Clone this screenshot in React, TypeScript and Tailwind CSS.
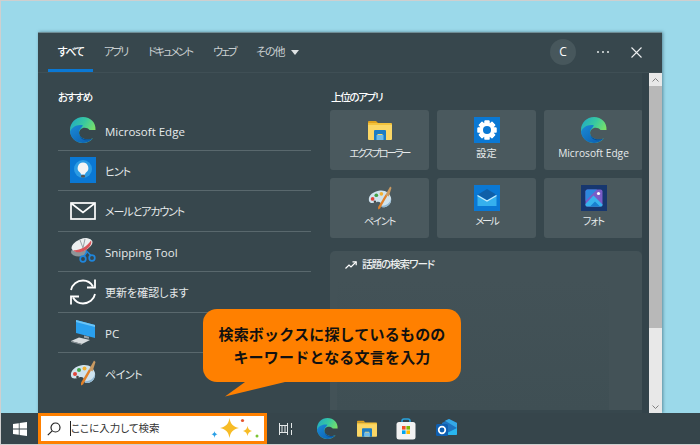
import React from "react";

const font = { fontFamily: '"Open Sans","Noto Sans CJK JP",sans-serif' };

function Edge({ s = 26 }: { s?: number }) {
  return (
    <svg width={s} height={s} viewBox="0 0 26 26" className="shrink-0">
      <defs>
        <linearGradient id="eg1" x1="0" y1="0" x2="1" y2="0.6">
          <stop offset="0" stopColor="#1ea6c9" />
          <stop offset="0.5" stopColor="#38c8a0" />
          <stop offset="1" stopColor="#8ae65a" />
        </linearGradient>
        <linearGradient id="eg2" x1="0" y1="0" x2="1" y2="1">
          <stop offset="0" stopColor="#1b8ad6" />
          <stop offset="1" stopColor="#0a5cae" />
        </linearGradient>
      </defs>
      <path d="M13 0C5.800 0 0 5.800 0 13c0 7.200 5.800 13 13 13 4 0 7.600-1.800 10-4.700-2.400 1.200-8 1.800-11.500-.8-3-2.200-3-6-1-8 2.500-2.500 7-2 9 .5h6C26 5.500 20.500 0 13 0z" fill="url(#eg1)" />
      <path d="M13 8.500C7.500 7 1.600 10 0 15c.8 6.500 6.300 11 13 11 4 0 7.600-1.800 10-4.700-2.400 1.200-8 1.800-11.500-.8-3-2.200-3.400-6.500-.8-9 .8-.9 1.500-2 2.300-3z" fill="url(#eg2)" />
      <path d="M9.500 17c0 3.500 3 6.500 7.500 6.300 2.300-.1 4.500-.9 6-2-2.400 1.200-8 1.800-11.500-.8-1-.8-1.700-2-2-3.500z" fill="#0b4f94" />
    </svg>
  );
}

function Paint({ s = 26 }: { s?: number }) {
  return (
    <svg width={s} height={s} viewBox="0 0 26 26" className="shrink-0">
      <path d="M1 16C0 10 6 6 13 5c6-.7 11 3 12 8 .8 5-2 9-7 10-2.500.5-4-1-4-3 0-2.500-2-3.500-5-2.500-3 1-7 2-8-1.500z" fill="#cfe3ee" />
      <path d="M14 21c2 .8 6 0 8.500-2.500 1.500-1.500 2.200-3.500 2.300-5.500.8 5-2 9-7 10-2 .4-3.500-.5-3.800-2z" fill="#8fb7d2" />
      <circle cx="5" cy="14" r="2" fill="#e0453a" />
      <circle cx="9" cy="10" r="2" fill="#43a047" />
      <circle cx="14.500" cy="8.500" r="2" fill="#f2b134" />
      <circle cx="7.500" cy="17" r="1.300" fill="#444" />
      <path d="M11 25.500l2-1 8-14-2-1.200-8 13.500z" fill="#e0812a" />
      <path d="M19 9.500l3.500 2 3-9.500-1.500-1.500z" fill="#c99a62" />
    </svg>
  );
}

function Hint() {
  return (
    <svg width="26" height="26" viewBox="0 0 26 26" className="shrink-0">
      <rect width="26" height="26" fill="#0a78d4" />
      <circle cx="13" cy="12" r="9" fill="#2b9be4" />
      <path d="M13 5.500a5.500 5.500 0 0 0-3 10c.7.6 1 1.200 1 2h4c0-.8.300-1.400 1-2a5.500 5.500 0 0 0-3-10z" fill="#f4f4f4" />
      <rect x="11" y="18" width="4" height="2.500" rx="1" fill="#555" />
    </svg>
  );
}

function MailOutline() {
  return (
    <svg width="26" height="18" viewBox="0 0 26 18" className="shrink-0">
      <rect x="1" y="1" width="24" height="16" fill="none" stroke="#fff" strokeWidth="1.700" />
      <path d="M1.500 1.500L13 10.500 24.500 1.500" fill="none" stroke="#fff" strokeWidth="1.700" />
    </svg>
  );
}

function Snip() {
  return (
    <svg width="26" height="26" viewBox="0 0 26 26" className="shrink-0">
      <ellipse cx="9" cy="14" rx="8" ry="4.500" fill="#8d9498" />
      <ellipse cx="12" cy="7" rx="11" ry="6" transform="rotate(-22 12 7)" fill="#eceff0" />
      <path d="M3 12c5 1 13-2 18-9.500 2 4-4 10-10 11.500-3 .7-6 .3-8-2z" fill="#d9555a" />
      <path d="M10 2l3 8M15 1l-2 9" stroke="#9aa2a6" strokeWidth="1" />
      <circle cx="13" cy="21" r="2.800" fill="none" stroke="#1f86dc" strokeWidth="1.700" />
      <circle cx="22" cy="20" r="2.800" fill="none" stroke="#1f86dc" strokeWidth="1.700" />
      <path d="M14 18.500l3-5M21 17.500l-5-5" stroke="#1f86dc" strokeWidth="1.500" />
    </svg>
  );
}

function Refresh() {
  return (
    <svg width="26" height="26" viewBox="0 0 26 26" className="shrink-0" fill="none" stroke="#fff" strokeWidth="1.800">
      <path d="M1 11C2 5.500 7 1.500 13 1.500c4.200 0 7.800 2.200 10 6" />
      <path d="M25 .5v8h-8" />
      <path d="M25 15c-1 5.500-6 9.500-12 9.500-4.200 0-7.800-2.200-10-6" />
      <path d="M1 25.500v-8h8" />
    </svg>
  );
}

function Pc() {
  return (
    <svg width="26" height="26" viewBox="0 0 26 26" className="shrink-0">
      <path d="M6 1l19 5v13L6 14z" fill="#2aa0ee" />
      <path d="M6 1l19 5v2L6 3z" fill="#6cc4f5" />
      <path d="M14 16.500l5 1.300v2l-5-1z" fill="#9aa4aa" />
      <path d="M1 22l8-3.500 11 2.500-8 4z" fill="#d8dcde" />
      <path d="M1 22l11 3v1L1 23z" fill="#8f979b" />
    </svg>
  );
}

function Folder({ w = 24 }: { w?: number }) {
  return (
    <svg width={w} height={(w * 20) / 24} viewBox="0 0 24 20" className="shrink-0">
      <path d="M0 2a1 1 0 0 1 1-1h7l2 2h-10z" fill="#e0a21e" />
      <path d="M0 3h23a1 1 0 0 1 1 1v3H0z" fill="#f3c23c" />
      <path d="M0 5h24v14a1 1 0 0 1-1 1H1a1 1 0 0 1-1-1z" fill="#fbd766" />
      <path d="M6 20v-9a1 1 0 0 1 1-1h10a1 1 0 0 1 1 1v9h-3.500v-6h-5v6z" fill="#1d7dc4" />
      <rect x="8.500" y="15" width="7" height="5" fill="#6fbbe8" />
    </svg>
  );
}

function Gear() {
  const teeth = [0, 45, 90, 135, 180, 225, 270, 315];
  return (
    <svg width="26" height="26" viewBox="0 0 26 26" className="shrink-0">
      <rect width="26" height="26" fill="#0a78d4" />
      {teeth.map((a) => (
        <rect key={a} x="10.500" y="3.500" width="5" height="19" rx="0.500" fill="#fff" transform={`rotate(${a} 13 13)`} />
      ))}
      <circle cx="13" cy="13" r="7.300" fill="#fff" />
      <circle cx="13" cy="13" r="4" fill="#0a78d4" />
    </svg>
  );
}

function MailColor() {
  return (
    <svg width="26" height="26" viewBox="0 0 26 26" className="shrink-0">
      <rect width="26" height="26" fill="#0a78d4" />
      <path d="M4 9.500L13 4l9 5.500L13 15z" fill="#0f5fa8" />
      <path d="M3.500 10.500L13 16l9.500-5.500V21H3.500z" fill="#35b0ee" />
      <path d="M3.500 10.500L13 16l9.500-5.500" fill="none" stroke="#c9ecfb" strokeWidth="1.200" />
    </svg>
  );
}

function Photos() {
  return (
    <svg width="26" height="26" viewBox="0 0 26 26" className="shrink-0">
      <rect width="26" height="26" fill="#17376f" />
      <rect x="4.500" y="4.500" width="17" height="17" rx="2" fill="#7a5cc6" />
      <path d="M4.500 19l8-8.500 9 9v.5a1.500 1.500 0 0 1-1.500 1.500H6a1.500 1.500 0 0 1-1.500-1.500z" fill="#37b4ee" />
      <path d="M9 21.500l5-5 5 5z" fill="#1880d0" />
      <circle cx="17.500" cy="8.500" r="1.600" fill="#fff" />
      <path d="M4.500 6.500a2 2 0 0 1 2-2H16L4.500 16z" fill="#2d88de" />
    </svg>
  );
}

function Sparkles() {
  return (
    <svg width="48" height="21" viewBox="0 0 48 21" className="shrink-0">
      <path d="M18.500 0c1 6 3.500 8.500 9.500 10-6 1.500-8.500 4-9.500 10-1-6-3.500-8.500-9.500-10 6-1.500 8.500-4 9.500-10z" fill="#f7bc26" />
      <path d="M36.500 8c.5 2.800 1.500 4 4.500 5-3 1-4 2.200-4.500 5-.5-2.800-1.500-4-4.500-5 3-1 4-2.200 4.500-5z" fill="#f7bc26" />
      <path d="M3.500 13c.3 1.800.9 2.500 3 3.300-2.100.8-2.700 1.500-3 3.700-.3-2.200-.9-2.900-3-3.700 2.100-.8 2.700-1.500 3-3.300z" fill="#2a9fe6" />
      <circle cx="31.500" cy="2.500" r="1.600" fill="#e5572f" />
      <circle cx="46" cy="18" r="1.500" fill="#7cc433" />
    </svg>
  );
}

function Store() {
  return (
    <svg width="20" height="22" viewBox="0 0 20 22" className="shrink-0">
      <path d="M6 5V3a2 2 0 0 1 2-2h4a2 2 0 0 1 2 2v2" fill="none" stroke="#29a4e0" strokeWidth="1.500" />
      <rect x="0.500" y="4" width="19" height="17.500" rx="2.500" fill="#f2f2f2" />
      <rect x="6" y="8" width="3.600" height="3.600" fill="#f25022" />
      <rect x="10.400" y="8" width="3.600" height="3.600" fill="#7fba00" />
      <rect x="6" y="12.400" width="3.600" height="3.600" fill="#00a4ef" />
      <rect x="10.400" y="12.400" width="3.600" height="3.600" fill="#ffb900" />
    </svg>
  );
}

function Outlook() {
  return (
    <svg width="21" height="20" viewBox="0 0 21 20" className="shrink-0">
      <path d="M6 4l7-4 8 4v11a1 1 0 0 1-1 1H7a1 1 0 0 1-1-1z" fill="#1f74c0" />
      <path d="M9 1.800L13 0l8 4v5z" fill="#35a8e6" />
      <path d="M7 16l14-7v6a1 1 0 0 1-1 1z" fill="#29b6ee" />
      <rect x="0" y="5" width="12" height="12" rx="1.500" fill="#0f5fb0" />
      <circle cx="6" cy="11" r="3.300" fill="none" stroke="#fff" strokeWidth="1.700" />
    </svg>
  );
}

const rows: [React.ReactNode, string, string][] = [
  [<Edge />, "Microsoft Edge", "text-[11.500px]"],
  [<Hint />, "ヒント", "text-[11px] tracking-[-1px]"],
  [<MailOutline />, "メールとアカウント", "text-[11px] tracking-[-1.100px]"],
  [<Snip />, "Snipping Tool", "text-[11.500px]"],
  [<Refresh />, "更新を確認します", "text-[11px]"],
  [<Pc />, "PC", "text-[11.500px]"],
  [<Paint />, "ペイント", "text-[11px] tracking-[-0.500px]"],
];

const tiles: [React.ReactNode, string, string][] = [
  [<Folder />, "エクスプローラー", "tracking-[-2px]"],
  [<Gear />, "設定", ""],
  [<Edge />, "Microsoft Edge", ""],
  [<Paint s={24} />, "ペイント", "tracking-[-1.200px]"],
  [<MailColor />, "メール", "tracking-[-2px]"],
  [<Photos />, "フォト", "tracking-[-1px]"],
];

export default function App() {
  return (
    <div
      style={font}
      className="relative w-[700px] h-[445px] overflow-hidden flex flex-col bg-[#9bd9ea] border-l border-t border-b border-[#cfcfcf] [font-feature-settings:'palt']"
    >
      <div className="flex-1 min-h-0 pt-[31px] pl-[37px]">
        <div className="w-[624px] h-full bg-[#37474d] flex flex-col border-t border-[#6f8d96] shadow-[1px_0_3px_rgba(50,90,105,0.6)]">
          {/* Header */}
          <div className="h-[40px] shrink-0 flex items-center border-b border-[#3f4f55] text-[#c9cfd1] text-[11px] relative">
            <div className="flex h-full items-center ml-[10px]">
              <div className="w-[45px] h-full flex items-center justify-center text-white font-medium border-b-[3px] border-[#0a78d4] pt-[3px] tracking-[-1.500px]">すべて</div>
              <span className="ml-[11px] w-[23px] whitespace-nowrap tracking-[-2px]">アプリ</span>
              <span className="ml-[21px] w-[44px] whitespace-nowrap tracking-[-2px]">ドキュメント</span>
              <span className="ml-[21px] w-[22px] whitespace-nowrap tracking-[-2px]">ウェブ</span>
              <span className="ml-[21px] whitespace-nowrap tracking-[-1px]">その他</span>
              <svg width="8" height="5" viewBox="0 0 8 5" className="ml-[6px]"><path d="M0 0h8L4 5z" fill="#dfe3e4" /></svg>
            </div>
            <div className="ml-auto flex items-center pb-[1px]">
              <div className="w-[26px] h-[26px] rounded-full bg-[#47575c] flex items-center justify-center text-white text-[12px] mr-[21px]">C</div>
              <div className="flex gap-[3px] mr-[22px]">
                <span className="w-[2px] h-[2px] bg-[#e4e8e9] rounded-full" />
                <span className="w-[2px] h-[2px] bg-[#e4e8e9] rounded-full" />
                <span className="w-[2px] h-[2px] bg-[#e4e8e9] rounded-full" />
              </div>
              <svg width="11" height="11" viewBox="0 0 11 11" className="mr-[20px]">
                <path d="M.5.5l10 10M10.500.5l-10 10" stroke="#eef0f1" strokeWidth="1.100" />
              </svg>
            </div>
          </div>

          {/* Body */}
          <div className="flex-1 min-h-0 flex">
            {/* Left */}
            <div className="w-[253px] ml-[20px] shrink-0 flex flex-col">
              <div className="text-[10.500px] text-white font-medium leading-[16px] mt-[16px] mb-[5px] tracking-[-1.500px]">おすすめ</div>
              {rows.map(([icon, label, size], i) => (
                <div key={i} className={`flex items-center h-[40.500px] shrink-0 ${i < 6 ? "border-b border-[#59686d]" : ""}`}>
                  <div className="w-[26px] ml-[12px] flex items-center justify-center shrink-0">{icon}</div>
                  <span className={`ml-[9px] pt-[3px] ${size} text-[#e6eaeb] whitespace-nowrap`}>{label}</span>
                </div>
              ))}
            </div>
            {/* Right */}
            <div className="w-[312px] ml-[19px] shrink-0 flex flex-col">
              <div className="text-[10.500px] text-white font-medium leading-[16px] mt-[16px] mb-[5px] ml-[1px] tracking-[-1.300px]">上位のアプリ</div>
              <div className="grid grid-cols-[99px_99px_99px] gap-x-[8px] gap-y-[8px] w-[313px]">
                {tiles.map(([icon, label, track], i) => (
                  <div key={i} className="h-[60px] rounded-[3px] bg-[#4a595e] flex flex-col items-center pt-[7px]">
                    <div className="h-[26px] flex items-center justify-center">{icon}</div>
                    <span className={`mt-[3px] text-[10.200px] leading-[14px] text-[#e6eaeb] whitespace-nowrap ${track}`}>{label}</span>
                  </div>
                ))}
              </div>
              <div className="mt-[13px] mb-[3px] flex-1 min-h-0 rounded-t-[5px] bg-[#435257] flex flex-col">
                <div className="flex items-center h-[28px] pl-[15px] shrink-0 gap-[5px]">
                  <svg width="12" height="8" viewBox="0 0 12 8" fill="none" stroke="#fff" strokeWidth="1.200">
                    <path d="M.5 7.500l3.500-3.500 2 2L11 1" />
                    <path d="M7.500 .8h3.700v3.500" />
                  </svg>
                  <span className="text-[10.500px] text-[#eef0f1] font-medium tracking-[-1px]">話題の検索ワード</span>
                </div>
                <div className="flex-1 min-h-0 ml-[7px] mr-[33px] bg-linear-to-b from-[#435257] to-[#3f4f54]" />
              </div>
            </div>
            {/* Gutter + scrollbar */}
            <div className="w-[7px] shrink-0 bg-[#33434a]" />
            <div className="w-[13px] shrink-0 bg-[#e8e8e8] flex flex-col">
              <div className="h-[13px] flex items-center justify-center">
                <svg width="7" height="4" viewBox="0 0 7 4" fill="none" stroke="#808080"><path d="M.5 3.500l3-3 3 3" /></svg>
              </div>
              <div className="h-[242px] bg-[#b8b8b8]" />
              <div className="mt-auto h-[13px] flex items-center justify-center">
                <svg width="7" height="4" viewBox="0 0 7 4" fill="none" stroke="#808080"><path d="M.5.500l3 3 3-3" /></svg>
              </div>
            </div>
          </div>
        </div>
      </div>

      {/* Taskbar */}
      <div className="h-[31px] shrink-0 bg-[#36454b] flex items-center">
        <div className="w-[37px] flex items-center justify-center">
          <svg width="14" height="14" viewBox="0 0 14 14" fill="#fff" className="ml-[1px]">
            <path d="M0 2l5.800-.8v5.400H0zM6.600 1.100L14 0v6.600H6.600zM0 7.400h5.800v5.400L0 12zM6.600 7.400H14V14l-7.400-1.100z" />
          </svg>
        </div>
        <div className="w-[229px] h-full bg-white border-[3px] border-[#ff8000] flex items-center">
          <svg width="14" height="14" viewBox="0 0 14 14" fill="none" stroke="#222" strokeWidth="1.200" className="ml-[6px]">
            <circle cx="8.500" cy="5.500" r="4.500" />
            <path d="M5.200 8.800L.8 13.200" />
          </svg>
          <span className="w-px h-[15px] bg-[#222] ml-[9px]" />
          <span className="text-[10.500px] text-[#333] whitespace-nowrap">ここに入力して検索</span>
          <div className="ml-auto mr-[5px]"><Sparkles /></div>
        </div>
        <svg width="14" height="12" viewBox="0 0 14 12" fill="none" stroke="#e4e8e9" strokeWidth="1" className="ml-[12px]">
          <path d="M.5 0v12M8.500 0v12M.5 2.500h8M.5 9.500h8M3 2.500v7M6 2.500v7" />
          <path d="M12.500 0v5M12.500 7v5" />
        </svg>
        <div className="ml-[24px]"><Edge s={21} /></div>
        <div className="ml-[19px]"><Folder w={20} /></div>
        <div className="ml-[19px]"><Store /></div>
        <div className="ml-[20px]"><Outlook /></div>
      </div>

      {/* Callout */}
      <div className="absolute left-[202px] top-[308px] w-[258px] h-[73px] rounded-[14px] bg-[#ff8000] flex items-center justify-center text-center text-[15px] leading-[23px] font-bold text-[#111] tracking-[0.2px] [font-feature-settings:normal]">
        <div>検索ボックスに探しているものの<br />キーワードとなる文言を入力</div>
      </div>
      <svg width="60" height="18" viewBox="0 0 60 18" className="absolute left-[224px] top-[380px]">
        <path d="M0 15.500L20 1h40z" fill="#ff8000" />
      </svg>
    </div>
  );
}
